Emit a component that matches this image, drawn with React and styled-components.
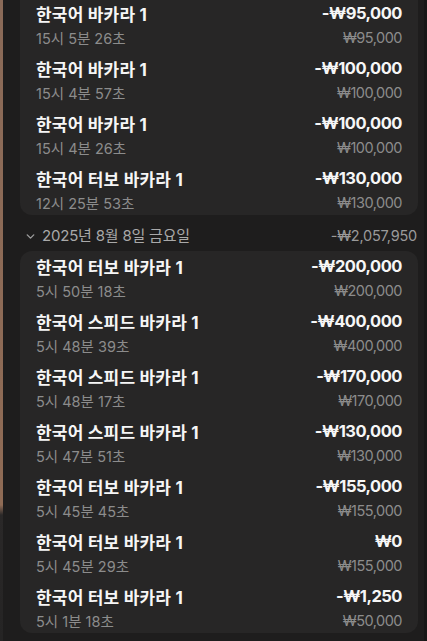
import styled, { createGlobalStyle } from "styled-components";
import { ChevronDown } from "lucide-react";

const GlobalStyle = createGlobalStyle`
  * { box-sizing: border-box; }
  html, body { margin: 0; padding: 0; background: #161616; }
  body {
    font-family: "Inter", "Noto Sans CJK KR", sans-serif;
    -webkit-font-smoothing: antialiased;
  }
`;

const groups = [
  {
    cutTop: true,
    rows: [
      { game: "한국어 바카라 1", time: "15시 5분 26초", win: "-₩95,000", bet: "₩95,000" },
      { game: "한국어 바카라 1", time: "15시 4분 57초", win: "-₩100,000", bet: "₩100,000" },
      { game: "한국어 바카라 1", time: "15시 4분 26초", win: "-₩100,000", bet: "₩100,000" },
      { game: "한국어 터보 바카라 1", time: "12시 25분 53초", win: "-₩130,000", bet: "₩130,000" },
    ],
  },
  {
    date: "2025년 8월 8일 금요일",
    total: "-₩2,057,950",
    rows: [
      { game: "한국어 터보 바카라 1", time: "5시 50분 18초", win: "-₩200,000", bet: "₩200,000" },
      { game: "한국어 스피드 바카라 1", time: "5시 48분 39초", win: "-₩400,000", bet: "₩400,000" },
      { game: "한국어 스피드 바카라 1", time: "5시 48분 17초", win: "-₩170,000", bet: "₩170,000" },
      { game: "한국어 스피드 바카라 1", time: "5시 47분 51초", win: "-₩130,000", bet: "₩130,000" },
      { game: "한국어 터보 바카라 1", time: "5시 45분 45초", win: "-₩155,000", bet: "₩155,000" },
      { game: "한국어 터보 바카라 1", time: "5시 45분 29초", win: "₩0", bet: "₩155,000" },
      { game: "한국어 터보 바카라 1", time: "5시 1분 18초", win: "-₩1,250", bet: "₩50,000" },
    ],
  },
];

export default function App() {
  return (
    <>
      <GlobalStyle />
      <Screen>
        <Strip />
        <Sheet>
          {groups.map((g, i) => (
            <Group key={i}>
              {g.date && (
                <DateHeader>
                  <DateLabel>
                    <ChevronDown size={13} strokeWidth={2.6} />
                    {g.date}
                  </DateLabel>
                  <DateTotal>{g.total}</DateTotal>
                </DateHeader>
              )}
              <Card $cutTop={g.cutTop}>
                {g.rows.map((r, j) => (
                  <Row key={j}>
                    <Line>
                      <Game>{r.game}</Game>
                      <Win>{r.win}</Win>
                    </Line>
                    <Line>
                      <Sub>{r.time}</Sub>
                      <Sub $amount>{r.bet}</Sub>
                    </Line>
                  </Row>
                ))}
              </Card>
            </Group>
          ))}
        </Sheet>
        <Edge />
      </Screen>
    </>
  );
}

const Screen = styled.div`
  display: flex;
  width: 427px;
  height: 641px;
  overflow: hidden;
  background: #1f1e1e;
`;

const Strip = styled.div`
  flex: 0 0 3px;
  background: linear-gradient(
    to bottom,
    #8a6a58 0,
    #8f6b55 505px,
    #2a2828 515px,
    #252424 100%
  );
`;

/* list is scrolled: the first card's top sits just above the viewport */
const Sheet = styled.div`
  flex: 1;
  display: flex;
  flex-direction: column;
  margin-top: -2px;
  padding: 0 6px 0 17px;
  background: #1e1d1d;
`;

const Edge = styled.div`
  flex: 0 0 3px;
  background: #171717;
`;

const Group = styled.section`
  display: flex;
  flex-direction: column;
`;

const DateHeader = styled.div`
  display: flex;
  justify-content: space-between;
  align-items: center;
  padding: 13px 1px 7px 4px;
  line-height: 16px;
`;

const DateLabel = styled.div`
  display: flex;
  align-items: center;
  gap: 5px;
  color: #a9a9a9;
  font-size: 15px;
  letter-spacing: -0.2px;

  svg {
    color: #9c9c9c;
  }
`;

const DateTotal = styled.div`
  color: #9a9a9a;
  font-size: 14.5px;
  letter-spacing: -0.2px;
`;

const Card = styled.div`
  display: flex;
  flex-direction: column;
  gap: 11px;
  padding: 5px 16px 3px;
  background: #272626;
  border-radius: ${(p) => (p.$cutTop ? "0 0 12px 12px" : "12px")};
`;

const Row = styled.div`
  display: flex;
  flex-direction: column;
  gap: 4px;
`;

const Line = styled.div`
  display: flex;
  justify-content: space-between;
  align-items: center;
  height: 20px;
`;

const Game = styled.span`
  color: #f6f6f6;
  font-size: 17px;
  font-weight: 700;
  letter-spacing: 0.2px;
`;

const Win = styled.span`
  color: #f6f6f6;
  font-size: 16.5px;
  font-weight: 700;
  letter-spacing: -0.5px;
`;

const Sub = styled.span`
  color: #8c8c8c;
  font-size: 14.5px;
  letter-spacing: ${(p) => (p.$amount ? "-0.5px" : "0")};
`;
